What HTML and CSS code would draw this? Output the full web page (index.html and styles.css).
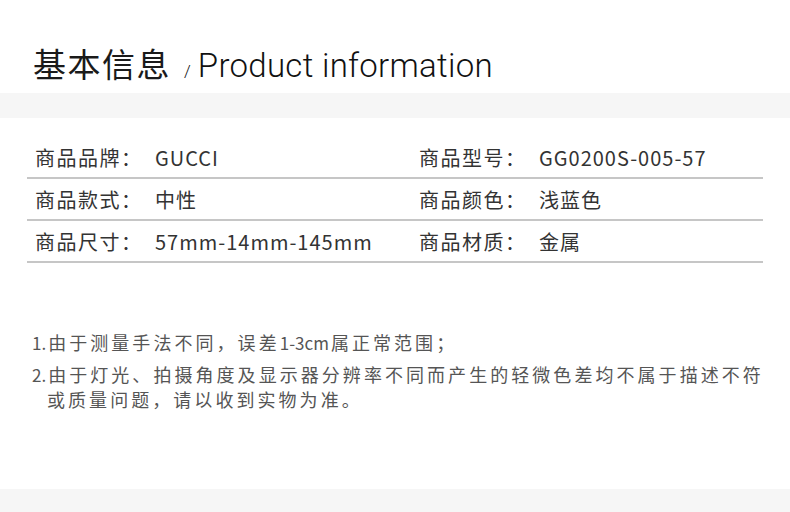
FILE: index.html
```html
<!DOCTYPE html>
<html lang="zh-CN">
<head>
<meta charset="utf-8">
<title>基本信息</title>
<link rel="stylesheet" href="styles.css">
</head>
<body>
<div class="page">
  <header class="head">
    <h1 class="title"><span class="title-cn">基本信息</span><span class="slash">/</span><span class="title-en">Product information</span></h1>
  </header>
  <div class="band"></div>
  <section class="info">
    <div class="row">
      <div class="cell"><span class="label">商品品牌：</span><span class="value">GUCCI</span></div>
      <div class="cell"><span class="label">商品型号：</span><span class="value">GG0200S-005-57</span></div>
    </div>
    <div class="row">
      <div class="cell"><span class="label">商品款式：</span><span class="value">中性</span></div>
      <div class="cell"><span class="label">商品颜色：</span><span class="value">浅蓝色</span></div>
    </div>
    <div class="row">
      <div class="cell"><span class="label">商品尺寸：</span><span class="value">57mm-14mm-145mm</span></div>
      <div class="cell"><span class="label">商品材质：</span><span class="value">金属</span></div>
    </div>
  </section>
  <section class="notes">
    <p class="note"><span class="num">1.</span>由于测量手法不同，误差<span class="num">1-3cm</span>属正常范围；</p>
    <p class="note"><span class="num">2.</span>由于灯光、拍摄角度及显示器分辨率不同而产生的轻微色差均不属于描述不符或质量问题，请以收到实物为准。</p>
  </section>
  <div class="band band-bottom"></div>
</div>
</body>
</html>
```

FILE: styles.css
```css
html, body {
  margin: 0;
  padding: 0;
  background: #ffffff;
}

.page {
  width: 790px;
  height: 512px;
  display: flex;
  flex-direction: column;
  font-family: "Noto Sans CJK SC", "Noto Sans", sans-serif;
  overflow: hidden;
}

.head {
  height: 93px;
  display: flex;
  align-items: flex-end;
  padding-left: 33px;
  box-sizing: border-box;
  padding-bottom: 11px;
}

.title {
  margin: 0;
  font-weight: 400;
  color: #111;
  display: flex;
  align-items: baseline;
  line-height: 1;
}

.title-cn {
  font-size: 33px;
  letter-spacing: 1.5px;
  color: #1a1a1a;
}

.slash {
  font-family: Roboto, "Noto Sans", sans-serif;
  font-weight: 300;
  font-size: 17px;
  margin: 0 7px 0 13px;
}

.title-en {
  font-family: Roboto, "Noto Sans", sans-serif;
  font-weight: 300;
  font-size: 33px;
  letter-spacing: 0.3px;
}

.band {
  height: 25px;
  background: #f6f6f6;
  flex: none;
}

.band-bottom {
  height: 23px;
  margin-top: auto;
}

.info {
  margin: 19px 27px 0 27px;
}

.row {
  display: grid;
  grid-template-columns: 384px 1fr;
  height: 40px;
  border-bottom: 2px solid #c6c6c6;
  align-items: center;
}

.cell {
  display: flex;
  align-items: center;
  padding-left: 8px;
  font-size: 20px;
  letter-spacing: 1px;
  color: #333;
}

.label {
  width: 120px;
  flex: none;
  letter-spacing: 1.5px;
}

.value {
  white-space: nowrap;
}

.notes {
  margin: 67px 12px 0 32px;
  color: #555;
}

.note {
  margin: 0 0 7px 0;
  font-size: 18px;
  line-height: 25px;
  letter-spacing: 3.05px;
  padding-left: 15px;
  text-indent: -15px;
}

.num {
  font-size: 17px;
  letter-spacing: 0;
  margin-right: 2px;
}
```
